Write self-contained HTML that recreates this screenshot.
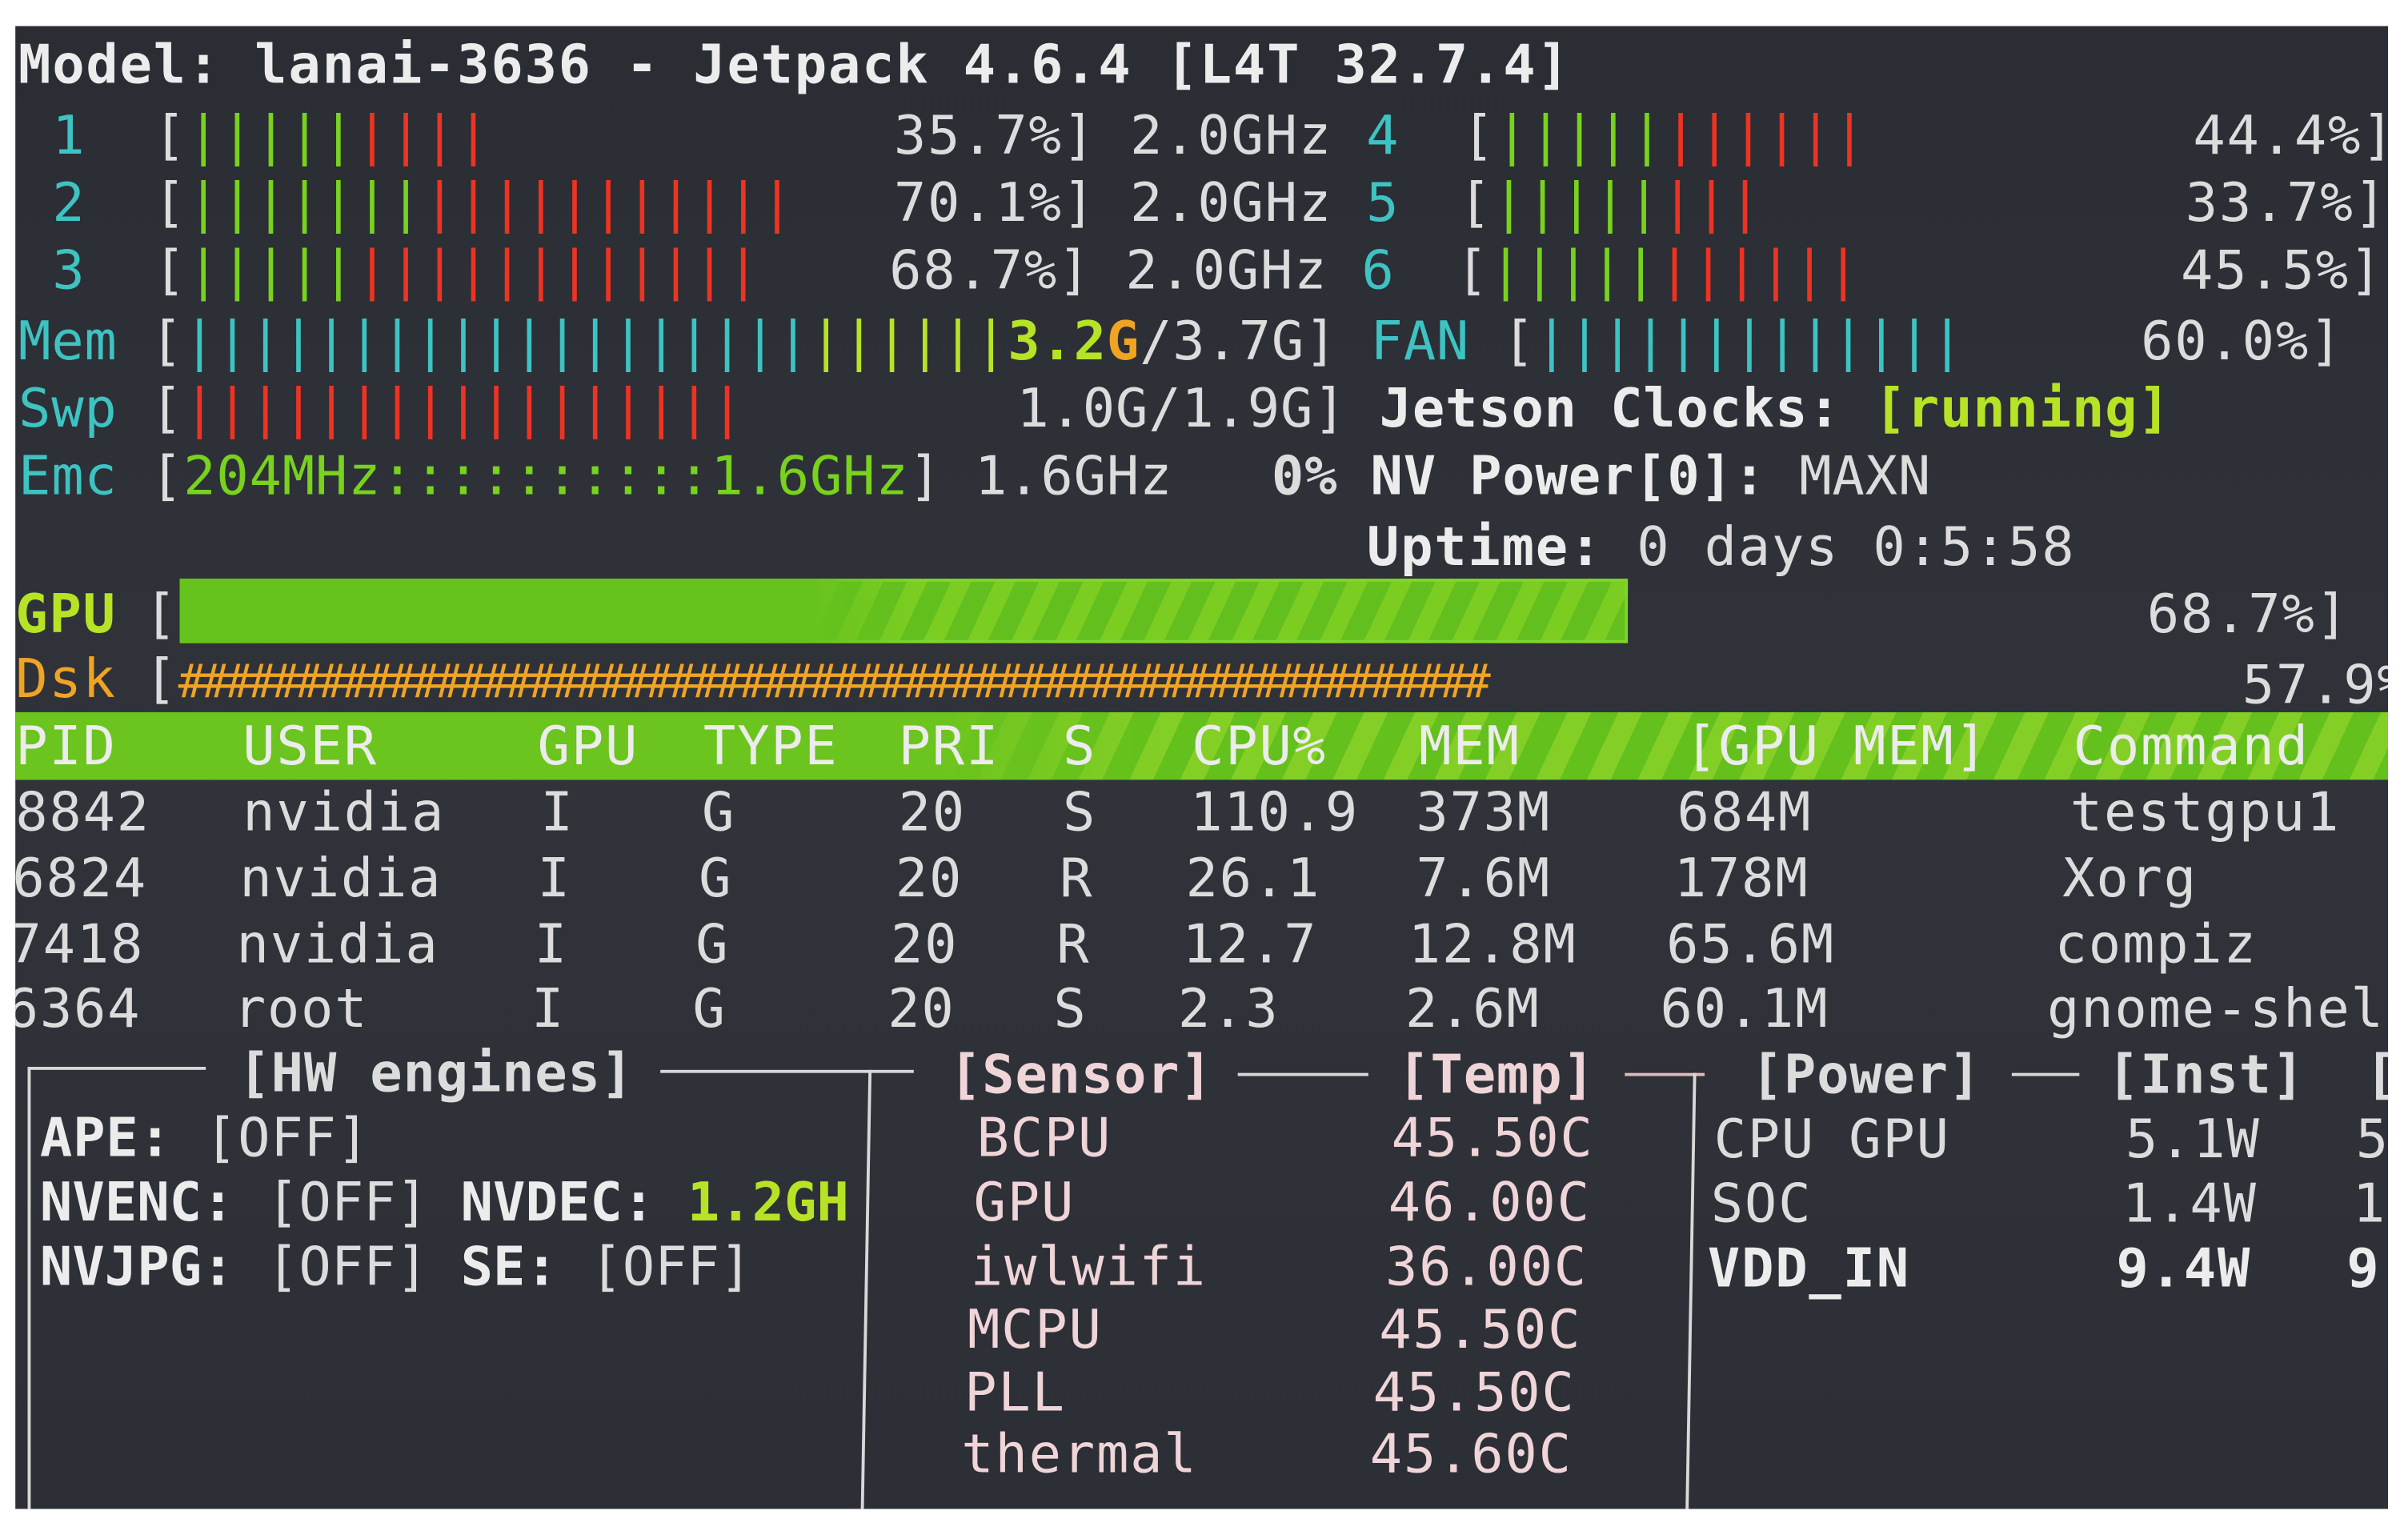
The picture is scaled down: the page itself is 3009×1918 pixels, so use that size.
<!DOCTYPE html>
<html><head><meta charset="utf-8"><style>
html,body{margin:0;padding:0;background:#fff;width:3009px;height:1918px;overflow:hidden}
#s{position:absolute;left:0;top:0;width:1568px;height:1000px;transform:scale(1.919,1.918);transform-origin:0 0}
#t{position:absolute;left:10px;top:17px;width:1545px;height:966px;overflow:hidden;
background:linear-gradient(180deg,#2a2d33,#30333a 50%,#2c2f35)}
.l{position:absolute;font-family:"DejaVu Sans Mono","Liberation Mono",monospace;font-size:35px;line-height:44px;white-space:pre;color:#dcdcdc;letter-spacing:0.9px}
.n{letter-spacing:0.4px}
.b{font-weight:bold}
.c{color:#3ec3c3}.g{color:#78d21e}.r{color:#ee3322}.y{color:#b6e326}.o{color:#f0a424}.w{color:#ececec}.p{color:#efd4d8}
.hl{position:absolute;height:2px;background:#d8d8d8}
.vl{position:absolute;width:2px;background:#d8d8d8}
.row{position:absolute;left:0;width:1545px;height:44px}
.row span{position:absolute;top:0}
</style></head><body><div id="s"><div id="t">
<div class="l b w" style="left:2px;top:4px">Model: lanai-3636 - Jetpack 4.6.4 [L4T 32.7.4]</div>

<div class="l" style="left:24px;top:50px"><span class="c">1</span>  [<span class="g">|||||</span><span class="r">||||</span></div>
<div class="l" style="left:572px;top:50px">35.7%] 2.0GHz <span class="c">4</span></div>
<div class="l" style="left:24px;top:94px"><span class="c">2</span>  [<span class="g">|||||||</span><span class="r">|||||||||||</span></div>
<div class="l" style="left:572px;top:94px">70.1%] 2.0GHz <span class="c">5</span></div>
<div class="l" style="left:24px;top:138px"><span class="c">3</span>  [<span class="g">|||||</span><span class="r">||||||||||||</span></div>
<div class="l" style="left:569px;top:138px">68.7%] 2.0GHz <span class="c">6</span></div>

<div class="l" style="left:942px;top:50px">[<span class="g">|||||</span><span class="r">||||||</span></div>
<div class="l" style="left:1418px;top:50px">44.4%]</div>
<div class="l" style="left:940px;top:94px">[<span class="g">|||||</span><span class="r">|||</span></div>
<div class="l" style="left:1413px;top:94px">33.7%]</div>
<div class="l" style="left:938px;top:138px">[<span class="g">|||||</span><span class="r">||||||</span></div>
<div class="l" style="left:1410px;top:138px">45.5%]</div>

<div class="l n" style="left:2px;top:184px"><span class="c">Mem</span> [<span class="c">|||||||||||||||||||</span><span class="y">||||||</span><span class="y b">3.2</span><span class="o b">G</span>/3.7G] <span class="c">FAN</span> [<span class="c">|||||||||||||</span></div>
<div class="l" style="left:1384px;top:184px">60.0%]</div>
<div class="l n" style="left:2px;top:228px"><span class="c">Swp</span> [<span class="r">|||||||||||||||||</span></div>
<div class="l n" style="left:652px;top:228px">1.0G/1.9G] <span class="b w">Jetson Clocks: </span><span class="b y">[running]</span></div>
<div class="l n" style="left:2px;top:272px"><span class="c">Emc</span> [<span class="g">204MHz::::::::::1.6GHz</span>] 1.6GHz   <span class="b">0%</span> <span class="b w">NV Power[0]:</span> MAXN</div>
<div class="l" style="left:880px;top:318px"><span class="b w">Uptime:</span> 0 days 0:5:58</div>

<div class="l b y" style="left:0px;top:362px">GPU</div>
<div class="l" style="left:84px;top:362px">[</div>
<div style="position:absolute;left:107px;top:360px;width:943px;height:42px;background:repeating-linear-gradient(115deg,#62bf1e 0 14px,#7ccd22 14px 26px);box-shadow:inset 0 0 0 2px #7fd52a"></div>
<div style="position:absolute;left:107px;top:360px;width:480px;height:42px;background:linear-gradient(90deg,#66c21c 85%,rgba(102,194,28,0))"></div>
<div class="l" style="left:1388px;top:362px">68.7%]</div>
<div class="l o" style="left:0px;top:404px">Dsk</div>
<div class="l" style="left:84px;top:404px">[<span class="o" style="font-size:30px;letter-spacing:-2.85px">########################################################</span></div>
<div class="l" style="left:1450px;top:408px">57.9%</div>

<div style="position:absolute;left:0;top:447px;width:1545px;height:44px;background:repeating-linear-gradient(115deg,#64c01c 0 16px,#84cf26 16px 30px)"></div>
<div style="position:absolute;left:0;top:447px;width:750px;height:44px;background:linear-gradient(90deg,#6cc41e 80%,rgba(108,196,30,0))"></div>
<div class="l w row" style="top:448px"><span style="left:0">PID</span><span style="left:148px">USER</span><span style="left:340px">GPU</span><span style="left:448px">TYPE</span><span style="left:575px">PRI</span><span style="left:682px">S</span><span style="left:766px">CPU%</span><span style="left:914px">MEM</span><span style="left:1087px">[GPU MEM]</span><span style="left:1340px">Command</span></div>

<div class="l row" style="top:491px"><span style="left:0">8842</span><span style="left:148px">nvidia</span><span style="left:342px">I</span><span style="left:447px">G</span><span style="left:575px">20</span><span style="left:682px">S</span><span style="left:765px">110.9</span><span style="left:912px">373M</span><span style="left:1082px">684M</span><span style="left:1338px">testgpu1</span></div>
<div class="l row" style="top:534px"><span style="left:-2px">6824</span><span style="left:146px">nvidia</span><span style="left:340px">I</span><span style="left:445px">G</span><span style="left:573px">20</span><span style="left:680px">R</span><span style="left:762px">26.1</span><span style="left:912px">7.6M</span><span style="left:1080px">178M</span><span style="left:1333px">Xorg</span></div>
<div class="l row" style="top:577px"><span style="left:-4px">7418</span><span style="left:144px">nvidia</span><span style="left:338px">I</span><span style="left:443px">G</span><span style="left:570px">20</span><span style="left:678px">R</span><span style="left:760px">12.7</span><span style="left:907px">12.8M</span><span style="left:1075px">65.6M</span><span style="left:1328px">compiz</span></div>
<div class="l row" style="top:619px"><span style="left:-6px">6364</span><span style="left:142px">root</span><span style="left:336px">I</span><span style="left:441px">G</span><span style="left:568px">20</span><span style="left:676px">S</span><span style="left:757px">2.3</span><span style="left:905px">2.6M</span><span style="left:1071px">60.1M</span><span style="left:1323px">gnome-shell</span></div>

<div class="hl" style="left:8px;top:678px;width:116px"></div>
<div class="vl" style="left:8px;top:678px;height:290px"></div>
<div class="l b n" style="left:145px;top:661px">[HW engines]</div>
<div class="hl" style="left:420px;top:680px;width:165px"></div>
<div class="vl" style="left:553px;top:680px;height:290px;transform:skewX(-1deg)"></div>
<div class="l b p n" style="left:608px;top:662px">[Sensor]</div>
<div class="hl" style="left:796px;top:682px;width:85px"></div>
<div class="l b p n" style="left:900px;top:662px">[Temp]</div>
<div class="hl" style="left:1048px;top:682px;width:52px;background:#e6b8bc"></div>
<div class="vl" style="left:1090px;top:682px;height:290px;transform:skewX(-1deg)"></div>
<div class="l b n" style="left:1130px;top:662px">[Power]</div>
<div class="hl" style="left:1300px;top:682px;width:44px"></div>
<div class="l b n" style="left:1362px;top:662px">[Inst]</div>
<div class="l b" style="left:1530px;top:662px">[</div>

<div class="l n" style="left:16px;top:703px"><span class="b w">APE:</span> [OFF]</div>
<div class="l n" style="left:16px;top:745px;letter-spacing:0"><span class="b w">NVENC:</span> [OFF] <span class="b w">NVDEC:</span> <span class="b y">1.2GH</span></div>
<div class="l n" style="left:16px;top:787px;letter-spacing:0"><span class="b w">NVJPG:</span> [OFF] <span class="b w">SE:</span> [OFF]</div>

<div class="l p" style="left:626px;top:703px">BCPU</div><div class="l p" style="left:896px;top:703px">45.50C</div>
<div class="l p" style="left:624px;top:745px">GPU</div><div class="l p" style="left:894px;top:745px">46.00C</div>
<div class="l p" style="left:622px;top:787px">iwlwifi</div><div class="l p" style="left:892px;top:787px">36.00C</div>
<div class="l p" style="left:620px;top:828px">MCPU</div><div class="l p" style="left:888px;top:828px">45.50C</div>
<div class="l p" style="left:618px;top:869px">PLL</div><div class="l p" style="left:884px;top:869px">45.50C</div>
<div class="l p" style="left:616px;top:909px">thermal</div><div class="l p" style="left:882px;top:909px">45.60C</div>

<div class="l" style="left:1106px;top:704px">CPU GPU</div><div class="l" style="left:1374px;top:704px">5.1W</div><div class="l" style="left:1524px;top:704px">5</div>
<div class="l" style="left:1104px;top:746px">SOC</div><div class="l" style="left:1372px;top:746px">1.4W</div><div class="l" style="left:1522px;top:746px">1</div>
<div class="l b w" style="left:1102px;top:788px">VDD_IN</div><div class="l b w" style="left:1368px;top:788px">9.4W</div><div class="l b w" style="left:1518px;top:788px">9.</div>
</div></div></body></html>
